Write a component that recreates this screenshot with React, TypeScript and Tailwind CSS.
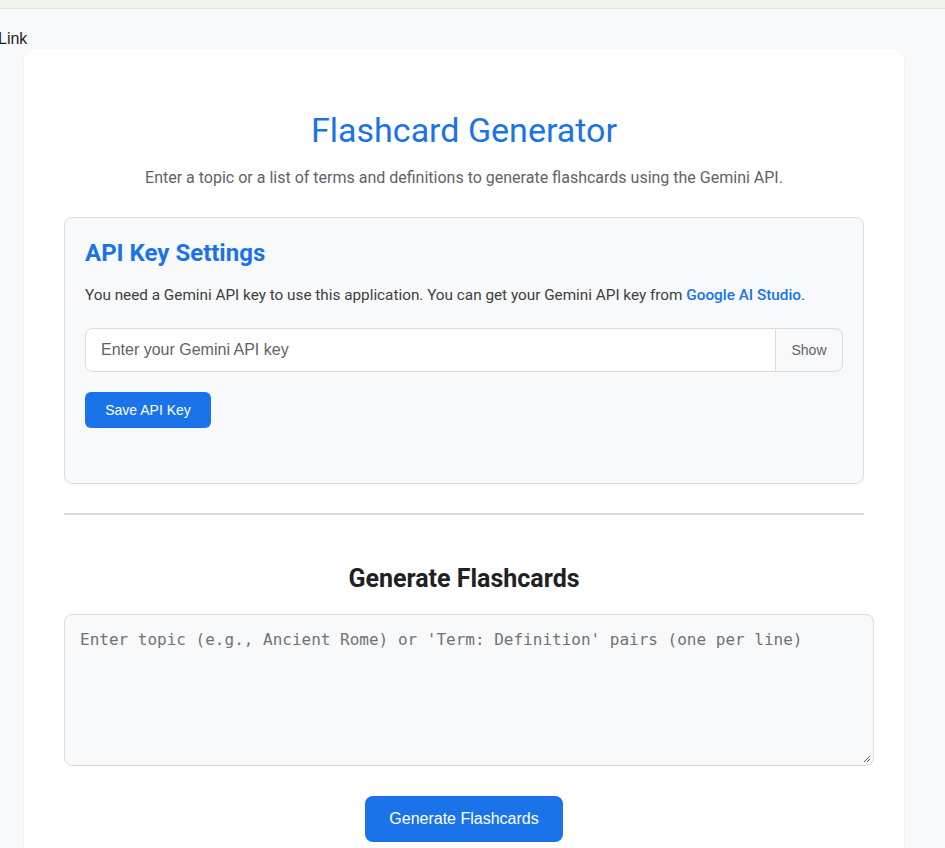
import React from "react";

export default function App() {
  const gs = { fontFamily: "Roboto, 'Open Sans', sans-serif" };
  return (
    <div className="min-h-[848px] bg-[#f8f9fa] overflow-hidden" style={{ fontFamily: "'Liberation Sans', Arial, sans-serif" }}>
      <div className="h-[9px] bg-[#f1f5e9] border-b border-[#e2e9d6]" />
      <div className="pt-[18px] h-[40px]">
        <a className="relative -left-[2px] text-[16px] leading-[20px] text-[#202124]">Link</a>
      </div>
      <div className="ml-[24px] w-[880px] bg-white rounded-[12px] shadow-[0_1px_3px_rgba(0,0,0,0.08)] px-[40px] pt-[61px] pb-[40px]">
        <h1 className="text-center text-[34px] leading-[40px] text-[#1a73e8] font-normal" style={gs}>
          Flashcard Generator
        </h1>
        <p className="mt-[16px] text-center text-[16px] leading-[24px] text-[#5f6368]" style={gs}>
          Enter a topic or a list of terms and definitions to generate flashcards using the Gemini API.
        </p>
        <div className="mt-[27px] w-[800px] bg-[#f8f9fa] border border-[#dadce0] rounded-[8px] px-[20px] pt-[19px] pb-[55px]">
          <h2 className="text-[24px] leading-[32px] font-bold text-[#1a73e8]" style={gs}>
            API Key Settings
          </h2>
          <p className="mt-[14px] text-[15.3px] leading-[24px] text-[#3c4043]" style={gs}>
            You need a Gemini API key to use this application. You can get your Gemini API key from{" "}
            <span className="text-[#1a73e8] font-medium">Google AI Studio</span>.
          </p>
          <div className="mt-[21px] flex h-[44px] w-[758px]">
            <div className="flex-1 flex items-center bg-white border border-[#dadce0] rounded-l-[8px] px-[15px] text-[16px] text-[#5f6368]">
              Enter your Gemini API key
            </div>
            <div className="w-[67px] flex items-center justify-center bg-[#f8f9fa] border border-l-0 border-[#dadce0] rounded-r-[8px] text-[14px] text-[#5f6368]">
              Show
            </div>
          </div>
          <button className="mt-[20px] h-[36px] w-[126px] bg-[#1a73e8] rounded-[6px] text-white text-[14px]">
            Save API Key
          </button>
        </div>
        <div className="mt-[29px] w-[800px] h-[2px] bg-[#dadce0]" />
        <h2 className="mt-[48px] text-center text-[25px] leading-[32px] font-bold text-[#202124]" style={gs}>
          Generate Flashcards
        </h2>
        <div className="mt-[19px] w-[810px] h-[152px] bg-[#f8f9fa] border border-[#dadce0] rounded-[8px] px-[15px] pt-[13px] text-[16px] leading-[24px] text-[#6f7378] relative" style={{ fontFamily: "'DejaVu Sans Mono', monospace" }}>
          Enter topic (e.g., Ancient Rome) or 'Term: Definition' pairs (one per line)
          <svg className="absolute right-[2px] bottom-[2px]" width="8" height="8" viewBox="0 0 8 8">
            <path d="M7 1 L1 7 M7 4 L4 7" stroke="#555" strokeWidth="1" />
          </svg>
        </div>
        <div className="mt-[30px] flex justify-center">
          <button className="h-[46px] w-[198px] bg-[#1a73e8] rounded-[8px] text-white text-[16px]">
            Generate Flashcards
          </button>
        </div>
      </div>
    </div>
  );
}
